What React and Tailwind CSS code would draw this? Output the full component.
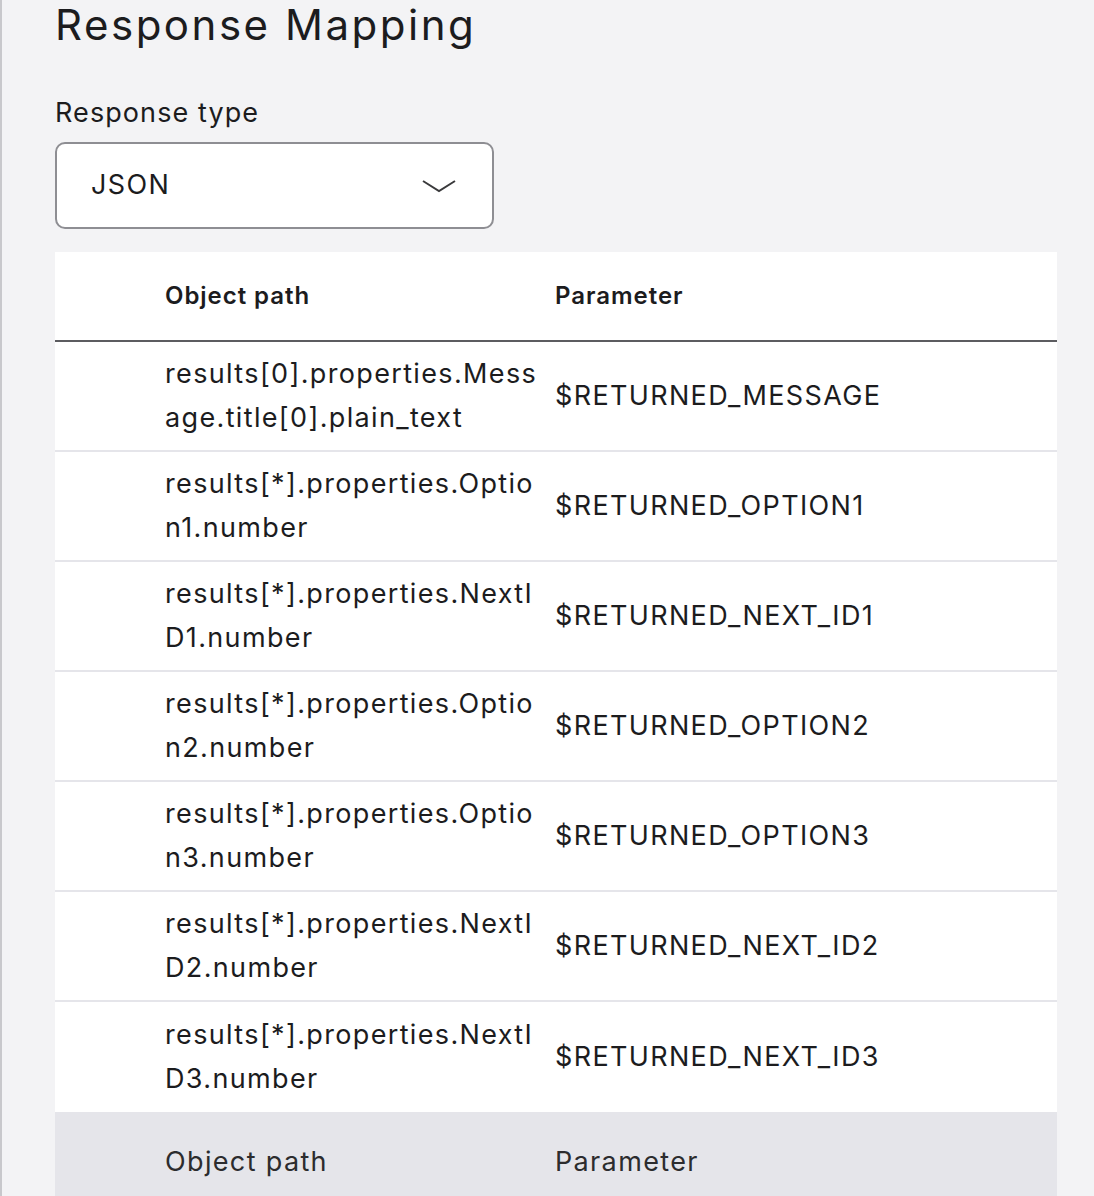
import React from 'react'

const ROWS = [
  ['results[0].properties.Message.title[0].plain_text', '$RETURNED_MESSAGE'],
  ['results[*].properties.Option1.number', '$RETURNED_OPTION1'],
  ['results[*].properties.NextID1.number', '$RETURNED_NEXT_ID1'],
  ['results[*].properties.Option2.number', '$RETURNED_OPTION2'],
  ['results[*].properties.Option3.number', '$RETURNED_OPTION3'],
  ['results[*].properties.NextID2.number', '$RETURNED_NEXT_ID2'],
  ['results[*].properties.NextID3.number', '$RETURNED_NEXT_ID3'],
]

export default function App() {
  return (
    <div className="h-[1196px] overflow-hidden bg-[#f3f3f5] border-l-2 border-[#c8c8cc] text-[#1c1c1e]" style={{ fontFamily: 'Inter, "Noto Sans", sans-serif' }}>
      <div className="pl-[53px] pr-[37px]">
        <h1 className="text-[42px] leading-[50px] font-normal tracking-[0.06em]">Response Mapping</h1>

        <p className="mt-[48px] text-[27px] leading-[30px] tracking-[0.04em]">Response type</p>
        <div className="mt-[14px] w-[439px] h-[87px] bg-white border-2 border-[#8e8e93] rounded-[10px] flex items-center justify-between pl-[34px] pr-[36px]">
          <span className="text-[27px] tracking-[0.05em]">JSON</span>
          <svg width="34" height="18" viewBox="0 0 34 18" fill="none" stroke="#3a3a3c" strokeWidth="2"><path d="M1 4l16 10L33 4" /></svg>
        </div>

        <div className="mt-[23px] bg-white">
          <div className="h-[90px] grid grid-cols-[110px_390px_1fr] items-center border-b-2 border-[#5c5c60] text-[24px] font-semibold tracking-[0.04em]">
            <div />
            <div>Object path</div>
            <div>Parameter</div>
          </div>
          {ROWS.map(([path, param], i) => (
            <div key={i} className={`h-[110px] grid grid-cols-[110px_390px_1fr] items-center text-[27px] tracking-[0.05em] ${i < ROWS.length - 1 ? 'border-b-2 border-[#e5e5ea]' : ''}`}>
              <div />
              <div className="leading-[44px] break-all pr-[12px]">{path}</div>
              <div>{param}</div>
            </div>
          ))}
          <div className="h-[100px] grid grid-cols-[110px_390px_1fr] items-center text-[27px] tracking-[0.05em] bg-[#e5e5ea] text-[#2c2c2e]">
            <div />
            <div>Object path</div>
            <div>Parameter</div>
          </div>
        </div>
      </div>
    </div>
  )
}
